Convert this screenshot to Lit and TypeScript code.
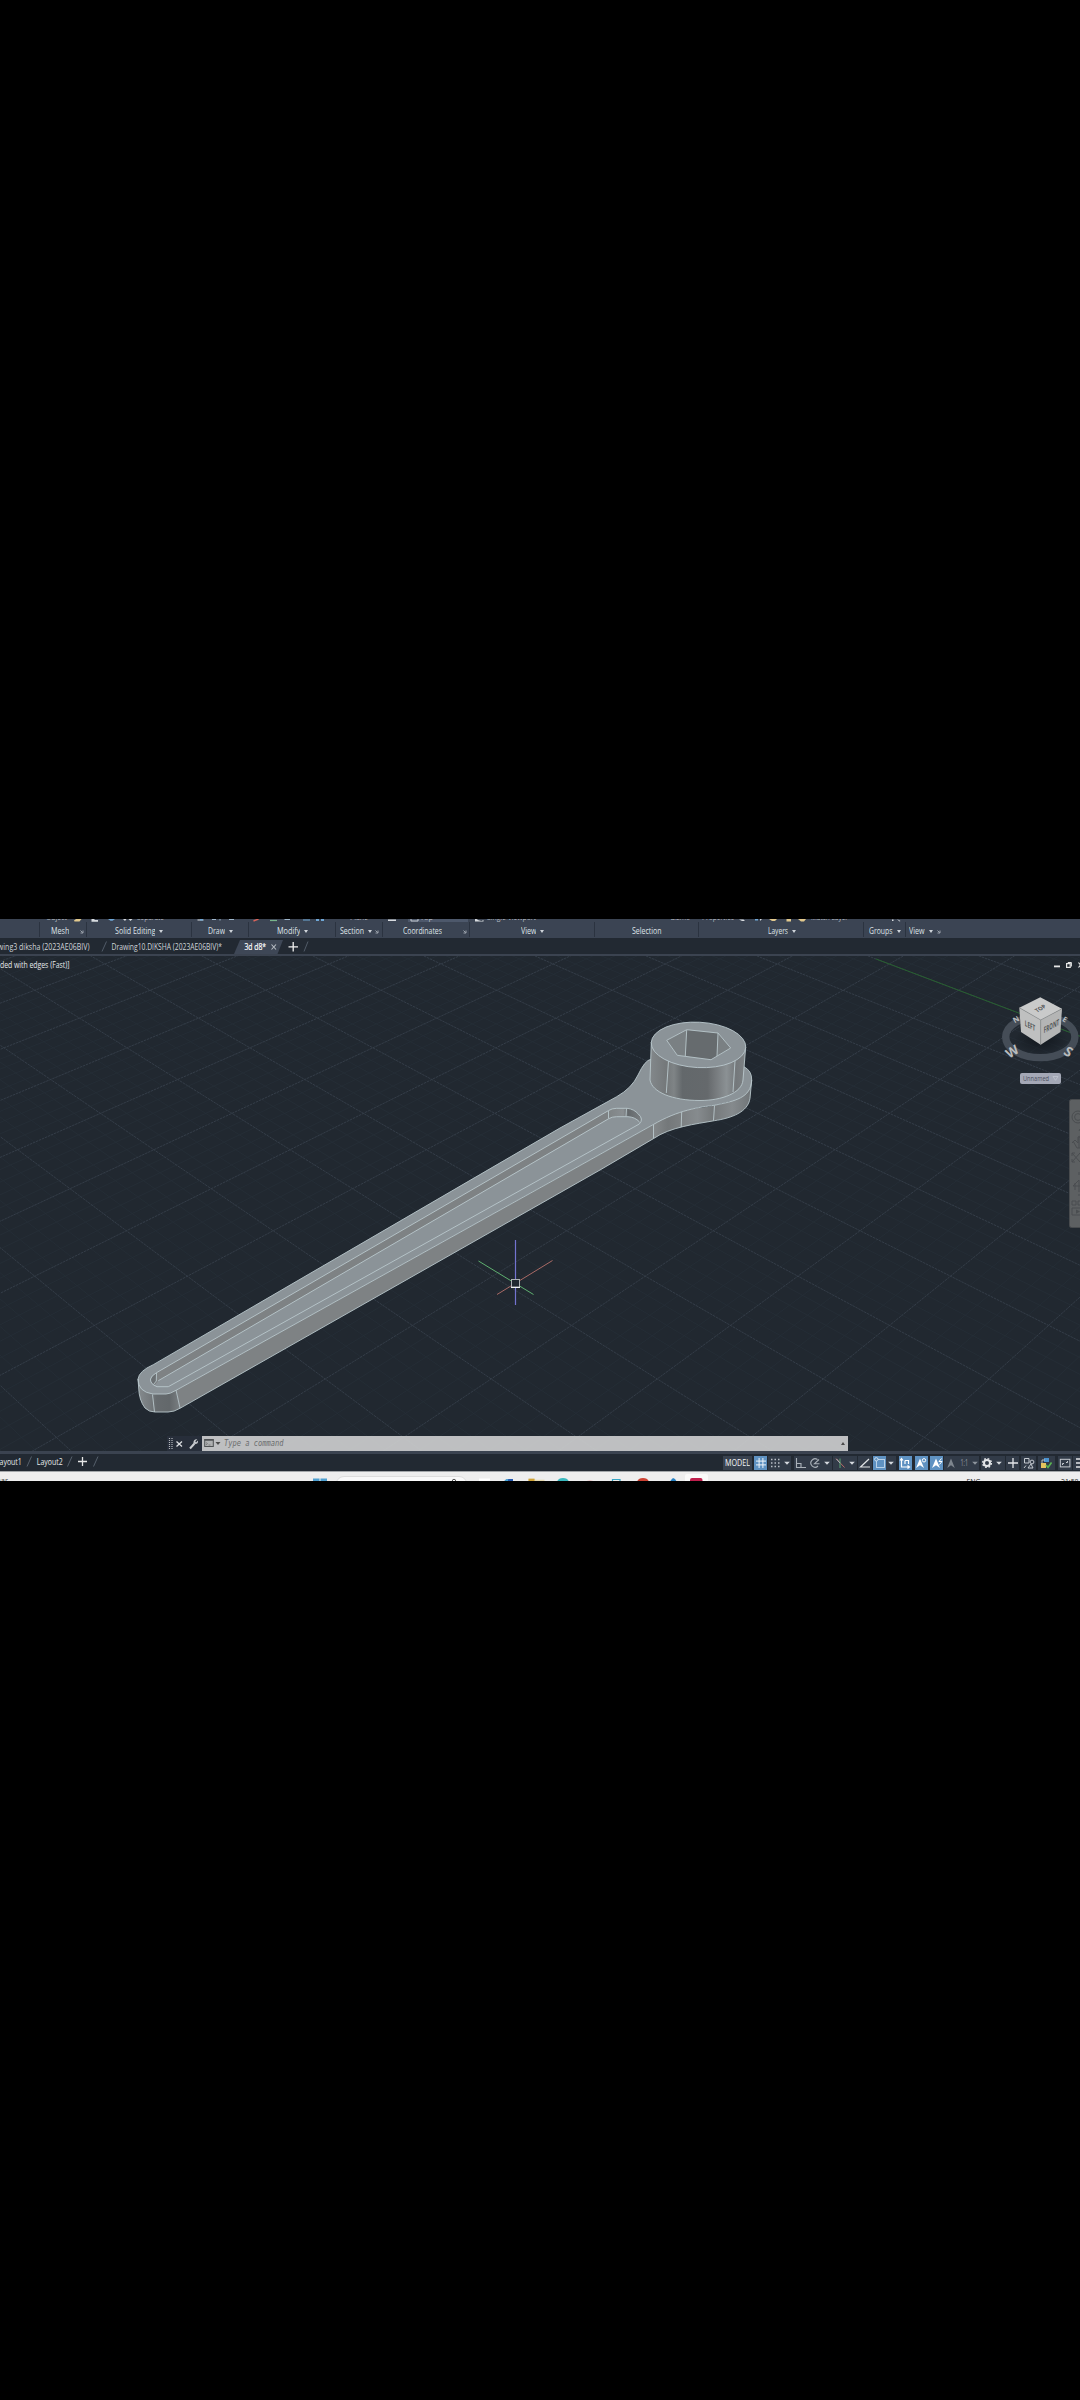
import { LitElement, html, svg, css } from "lit";
import { customElement } from "lit/decorators.js";

/* Ribbon panels: width, label inset, label width, whether it has a dropdown or a launcher (inset from right) */
interface Panel {
  w: number;
  pad: number;
  text: string;
  tw: number;
  arrow?: boolean;
  launch?: number;
}

const panels: Panel[] = [
  { w: 39.5, pad: 0, text: "", tw: 0 },
  { w: 47, pad: 11, text: "Mesh", tw: 18.5, launch: 2 },
  { w: 105, pad: 28, text: "Solid Editing", tw: 40.5, arrow: true },
  { w: 57, pad: 16, text: "Draw", tw: 17, arrow: true },
  { w: 87.5, pad: 28, text: "Modify", tw: 23.5, arrow: true },
  { w: 46.5, pad: 3.5, text: "Section", tw: 24, arrow: true, launch: 3 },
  { w: 87.5, pad: 20.5, text: "Coordinates", tw: 39, launch: 2.5 },
  { w: 124.5, pad: 50.5, text: "View", tw: 15.5, arrow: true },
  { w: 104, pad: 37.5, text: "Selection", tw: 29.5 },
  { w: 165, pad: 69, text: "Layers", tw: 20, arrow: true },
  { w: 42, pad: 5.5, text: "Groups", tw: 23.5, arrow: true },
  { w: 174.5, pad: 3.5, text: "View", tw: 15.5, arrow: true, launch: 139.5 },
];

/* One line of text squeezed or stretched to a given width */
const fit = (text: string, w: number, size = 8.6, fill = "#dfe3e8", h = 12) => html`
  <svg width=${w} height=${h} viewBox="0 0 ${w} ${h}" class="fit">
    <text x="0" y=${h - 3} font-size=${size} font-family="Open Sans, Noto Sans, sans-serif" fill=${fill}
      textLength=${w} lengthAdjust="spacingAndGlyphs">${text}</text>
  </svg>`;

/* Perspective ground grid */
const node = (p: number, q: number): [number, number] => {
  const y = 102 + 1 / (0.0011601 - 0.00003427 * (p + q));
  const a = (p - q) / 2 + 0.5;
  return [509.1 + (a - 0.108) * 0.13 * (y - 102), y];
};
const seg = (a: [number, number], b: [number, number]) =>
  `M${a[0].toFixed(1)} ${a[1].toFixed(1)}L${b[0].toFixed(1)} ${b[1].toFixed(1)}`;

const gridPaths = () => {
  let major = "";
  let minor = "";
  for (let i = -50; i <= 80; i++) {
    const v = i / 5;
    const d = seg(node(v, -4 - v), node(v, 17 - v)) + seg(node(-4 - v, v), node(17 - v, v));
    if (i % 5 === 0) major += d;
    else minor += d;
  }
  return { major, minor };
};
const grid = gridPaths();

@customElement("cad-viewport")
class CadViewport extends LitElement {
  static styles = css`
    :host { display: block; width: 1080px; height: 495px; }
    svg { display: block; }
    .minor { stroke: #262e37; stroke-width: 0.8; fill: none; }
    .major { stroke: #343d48; stroke-width: 1; fill: none; stroke-dasharray: 2.5 0.8; }
    .edge { stroke: #b9c7cc; stroke-width: 0.9; fill: none; stroke-linejoin: round; }
    .t { font-family: "Open Sans", "Noto Sans", sans-serif; }
  `;

  render() {
    return html`
      <svg width="1080" height="495" viewBox="0 956 1080 495">
        <defs>
          <linearGradient id="cyl" x1="650" x2="745.7" gradientUnits="userSpaceOnUse" y1="0" y2="0">
            <stop offset="0" stop-color="#83888b" /><stop offset="0.17" stop-color="#74787a" />
            <stop offset="0.25" stop-color="#7f8486" /><stop offset="0.34" stop-color="#63686b" />
            <stop offset="0.6" stop-color="#65696c" /><stop offset="0.68" stop-color="#75797c" />
            <stop offset="0.8" stop-color="#8b9194" /><stop offset="0.9" stop-color="#74787b" />
            <stop offset="1" stop-color="#7d8285" />
          </linearGradient>
          <linearGradient id="side" x1="653" x2="752" gradientUnits="userSpaceOnUse" y1="0" y2="0">
            <stop offset="0" stop-color="#85898b" /><stop offset="0.15" stop-color="#74787a" />
            <stop offset="0.28" stop-color="#7c8082" /><stop offset="0.45" stop-color="#868b8e" />
            <stop offset="0.6" stop-color="#74787a" /><stop offset="0.8" stop-color="#858a8d" />
            <stop offset="1" stop-color="#6f7477" />
          </linearGradient>
          <linearGradient id="tip" x1="138" x2="180" gradientUnits="userSpaceOnUse" y1="0" y2="0">
            <stop offset="0" stop-color="#858b8e" /><stop offset="0.3" stop-color="#74797c" />
            <stop offset="0.45" stop-color="#666b6e" /><stop offset="0.75" stop-color="#63686b" />
            <stop offset="1" stop-color="#7a7f82" />
          </linearGradient>
          <linearGradient id="slot" x1="608" x2="642" gradientUnits="userSpaceOnUse" y1="0" y2="0">
            <stop offset="0" stop-color="#7e8385" /><stop offset="0.45" stop-color="#8a8f92" />
            <stop offset="0.6" stop-color="#63686b" /><stop offset="1" stop-color="#7c8184" />
          </linearGradient>
          <radialGradient id="shade"><stop offset="0" stop-color="#11161c" stop-opacity="0.9" /><stop offset="1" stop-color="#11161c" stop-opacity="0" /></radialGradient>
        </defs>
        <rect y="956" width="1080" height="495" fill="#212830" />
        <path class="minor" d=${grid.minor} />
        <path class="major" d=${grid.major} />
        <path d=${seg(node(2.8, -3), node(6, -3))} stroke="#27602f" stroke-width="1" />

        ${this.wrench()} ${this.cursor()} ${this.cube()} ${this.navBar()}

        <g class="t">
          <text x="0" y="967.6" font-size="8.8" fill="#e6e9ec" textLength="69.5" lengthAdjust="spacingAndGlyphs">ded with edges (Fast)]</text>
        </g>
        <g fill="none" stroke="#e6e6e6">
          <path d="M1054 966.4h6" stroke-width="1.8" />
          <rect x="1066.6" y="963.6" width="3.6" height="3.8" stroke-width="1.2" />
          <path d="M1067.8 962.5h3.6v4" stroke-width="1" />
          <path d="M1078.5 962.5l4 5M1082.5 962.5l-4 5" stroke-width="1.2" />
        </g>
      </svg>
    `;
  }

  wrench() {
    return svg`
      <path fill="#7e8284" d="M176 1390L572 1170L653 1124.7V1138.9L600 1170L180 1408.3Z" />
      <path fill="url(#tip)" d="M138 1379L138.7 1388Q139 1400 145 1408Q149 1412 155 1412H168Q174 1412 180 1408.3L176 1388Z" />
      <path fill="url(#side)" d="M653 1124C682 1105 700 1110 714.3 1105.3Q748 1100 751.7 1080L750 1098.3C748 1112 732 1118 714.3 1120.7C696 1124 670 1127 653 1138.9Z" />
      <path fill="#8b9398" d="M138 1379Q139 1371 153.3 1364.7L560 1128L616.7 1096.7Q632 1088 638 1075Q645 1060 651 1059L744 1066.7Q752 1071 751.7 1080C751 1098 735 1100.5 714.3 1105.3C700 1107 678 1110 653 1124.7L572 1170L176 1390.3Q170 1394 166 1394H153Q138 1392 138 1379Z" />
      <path fill="#7e8284" d="M156.5 1372.7L608.3 1110.7V1118.7L158.3 1380.7L155 1385Q148 1379 156.5 1372.7Z" />
      <path fill="#6a6f72" d="M156.2 1373.2V1382L154 1385Q147 1379 156.2 1373.2Z" />
      <path fill="url(#slot)" d="M608.3 1110.7Q612 1108.3 616.7 1108.3H627Q634 1109 638.3 1114Q642 1118 640.5 1122.5Q636 1116.7 628 1116.7H616.7Q612 1116.7 608.3 1118.7Z" />
      <path class="edge" d="M138 1379Q139 1371 153.3 1364.7L560 1128L616.7 1096.7Q632 1088 638 1075Q645 1060 651 1059.3" />
      <path class="edge" d="M138 1379Q138 1392 153 1394H166Q170 1394 176 1390.3L572 1170L653 1124.7C678 1110 700 1107 714.3 1105.3C735 1101 751 1098 751.7 1080Q752 1071 744 1066.7" />
      <path class="edge" d="M138 1379L138.7 1388Q139 1400 145 1408Q149 1412 155 1412H168Q174 1412 180 1408.3L600 1170L653.3 1138.7C670 1127 696 1124 714.3 1120.7C732 1118 748 1112 750 1098.3L751.7 1080" />
      <path class="edge" d="M152.5 1394.5L154.5 1412M176 1390L180 1408M653.5 1125V1138.5M681.7 1112L681.2 1127M714.5 1105.5L713.5 1120.5" />
      <path class="edge" d="M158.3 1380.7L608.7 1118.7Q612 1116.7 616.7 1116.7H628Q635 1117 639.5 1122" />
      <path class="edge" d="M156.5 1372.7L608.3 1110.7Q612 1108.3 616.7 1108.3H627Q634 1109 638.3 1114Q644 1119 639.3 1124L168.3 1386.7H157Q150 1384 150.5 1379Q151 1376 156.5 1372.7L156.3 1381L153.5 1384.5M608.5 1111V1118.5M626.5 1108.5L626 1116.5" />

      <path fill="url(#cyl)" d="M651.3 1042L650 1080C652 1092 672 1100.5 700 1100.5C722 1100.5 742 1093 743 1080L745.7 1047Z" />
      <path class="edge" d="M651.3 1042L650 1080C652 1092 672 1100.5 700 1100.5C722 1100.5 742 1093 743 1080L745.7 1047" />
      <path class="edge" d="M668.5 1061L666.3 1093M735 1061L733 1092" />
      <ellipse cx="698.5" cy="1044.9" rx="47.3" ry="22.7" transform="rotate(3 698.5 1044.9)" fill="#8b9398" stroke="#b9c7cc" stroke-width="0.9" />
      <path fill="#666b6e" d="M666.7 1040.3L686.7 1029.7L718 1033L730.7 1048L711 1059.7L677.3 1055.3Z" />
      <path fill="#7a8083" d="M666.7 1040.3L686.7 1029.7L685.3 1056L677.3 1055.3ZM718 1033L730.7 1048L717 1056.3Z" />
      <path class="edge" d="M666.7 1040.3L686.7 1029.7L718 1033L730.7 1048L711 1059.7L677.3 1055.3ZM686.7 1030L685.3 1056M718 1033L717 1056" />
    `;
  }

  cursor() {
    return svg`
      <path d="M478.5 1261L533.5 1294.5" stroke="#5fb070" stroke-width="1" />
      <path d="M497 1294.5L552.5 1260.5" stroke="#a96a66" stroke-width="1" />
      <path d="M515.5 1240V1305" stroke="#7373cf" stroke-width="1.2" />
      <rect x="511.5" y="1279.5" width="8" height="7.6" fill="#212830" stroke="#aeb2b5" stroke-width="1" />
      <path d="M511 1287.4h9" stroke="#fff" stroke-width="1" />
    `;
  }

  cube() {
    return svg`
      <ellipse cx="1040.3" cy="1037" rx="34.6" ry="20.6" fill="none" stroke="#454d57" stroke-width="7.4" />
      <g class="t" fill="#b9bcbe" font-weight="700" text-anchor="middle">
        <text font-size="7.5" transform="translate(1017.5 1021.8) rotate(-30)">N</text>
        <text font-size="7.5" transform="translate(1063.5 1021.8) rotate(30)">E</text>
        <text font-size="13" transform="translate(1014.5 1055.5) rotate(-32)">W</text>
        <text font-size="13.5" transform="translate(1066 1055.8) rotate(32)">S</text>
      </g>
      <ellipse cx="1041" cy="1040" rx="27" ry="14" fill="url(#shade)" />
      <path fill="#c9caca" d="M1040.3 997.3L1062 1008.7L1040.7 1020L1019.3 1007.7Z" />
      <path fill="#bfc0c0" d="M1019.3 1007.7L1040.7 1020V1044.7L1021 1032Z" />
      <path fill="#b4b5b5" d="M1062 1008.7L1040.7 1020V1044.7L1060.5 1032Z" />
      <path fill="none" stroke="#8d9090" stroke-width="0.6" d="M1019.3 1007.7L1040.7 1020L1062 1008.7M1040.7 1020V1044.7" />
      <g class="t" fill="#55585a" font-weight="700" text-anchor="middle">
        <text font-size="6.6" textLength="11" lengthAdjust="spacingAndGlyphs" transform="matrix(0.85 -0.5 0.65 0.6 1042 1009.8)">TOP</text>
        <text font-size="8" textLength="11.500" lengthAdjust="spacingAndGlyphs" transform="matrix(0.9 0.48 0 1 1030 1028.5)">LEFT</text>
        <text font-size="8.4" textLength="17" lengthAdjust="spacingAndGlyphs" transform="matrix(0.9 -0.5 0 1 1051.5 1029)">FRONT</text>
      </g>
      <rect x="1020" y="1073" width="41" height="11" rx="2" fill="#a4a8b6" />
      <text class="t" x="1023" y="1080.9" font-size="7" fill="#4d505e" textLength="26" lengthAdjust="spacingAndGlyphs">Unnamed</text>
      <path d="M1053 1076.5h5l-2.500 3.800z" fill="none" stroke="#c4c8d2" stroke-width="0.7" />
    `;
  }

  navBar() {
    return svg`
      <rect x="1069.5" y="1099.5" width="20" height="128" rx="2" fill="#5d6062" stroke="#484b4e" />
      <g fill="none" stroke="#4a4d50" stroke-width="1">
        <circle cx="1078" cy="1117" r="6" /><circle cx="1078" cy="1117" r="3.4" />
        <path d="M1079 1131l1-2M1072 1143l3-3 3 3v-6q2-2 2 1M1073 1141l4 7h4M1079 1148v-11" />
        <path d="M1072 1153l8 9M1072 1162l8-9M1072 1156v-3h3M1072 1159v3h3" />
        <path d="M1073 1186l6-6v12M1073 1186h8M1075 1183v7M1079 1172v3M1079 1194v2" />
        <path d="M1072 1201h4v4h-4zM1078 1201h4v4h-4zM1072 1208h10v7h-10z" />
      </g>
      <path fill="#4a4d50" d="M1076 1209.5l4 2-4 2.3z" />
    `;
  }
}

/* Status bar cells: gap before, width, glyph, look */
interface Cell {
  gap: number;
  w: number;
  glyph: string;
  on?: boolean;
}
const cells: Cell[] = [
  { gap: 2.5, w: 13, glyph: "grid", on: true },
  { gap: 0.7, w: 14.3, glyph: "dots" },
  { gap: 0, w: 9.5, glyph: "caret" },
  { gap: 2.5, w: 14, glyph: "ortho" },
  { gap: 0, w: 14.5, glyph: "polar" },
  { gap: 0, w: 9.5, glyph: "caret" },
  { gap: 0.6, w: 14.4, glyph: "iso" },
  { gap: 0, w: 10, glyph: "caret" },
  { gap: 1, w: 14, glyph: "angle" },
  { gap: 1, w: 13.3, glyph: "osnap", on: true },
  { gap: 0, w: 10, glyph: "caret" },
  { gap: 2.5, w: 12.9, glyph: "ucs", on: true },
  { gap: 3.2, w: 12.8, glyph: "anno", on: true },
  { gap: 2.5, w: 12.8, glyph: "anno2", on: true },
  { gap: 1, w: 13.5, glyph: "annoOff" },
  { gap: 0, w: 13.5, glyph: "scale" },
  { gap: 0, w: 8, glyph: "caretOff" },
  { gap: 2, w: 13, glyph: "gear" },
  { gap: 0, w: 11, glyph: "caret" },
  { gap: 1, w: 13.5, glyph: "plus" },
  { gap: 2, w: 14.5, glyph: "iso2" },
  { gap: 2, w: 17, glyph: "hw" },
  { gap: 3, w: 14, glyph: "screen" },
  { gap: 1.5, w: 10, glyph: "menu" },
];

const glyphs: Record<string, unknown> = {
  grid: svg`<path d="M-5 -1.900H5M-5 1.900H5M-1.900 -5V5M1.900 -5V5" stroke="#eef4fa" stroke-width="1"/>`,
  dots: svg`<path d="M-4 -3.5H4.6M-4 0H4.6M-4 3.5H4.6" stroke="#b9bfc6" stroke-width="1.4" stroke-dasharray="1.5 2"/>`,
  caret: svg`<path d="M-2.8 -1.3H2.8L0 1.8Z" fill="#d5d9de"/>`,
  caretOff: svg`<path d="M-2.8 -1.3H2.8L0 1.8Z" fill="#8d949c"/>`,
  ortho: svg`<path d="M-4.5 -5V4.5H5M-4.5 0.5H0V4.5" fill="none" stroke="#aab1b9" stroke-width="1.1"/>`,
  polar: svg`<path d="M3 3A4.2 4.2 0 1 1 2.5 -3.5M4.5 0.7H-0.5L4 -3.500" fill="none" stroke="#aab1b9" stroke-width="1.1"/>`,
  iso: svg`<path d="M-4 -4.5L4.5 4.5" stroke="#b86a66" stroke-width="1"/><path d="M0 -4.5V5" stroke="#58a574" stroke-width="1"/><path d="M-3.5 -4L0 0" stroke="#aab1b9"/>`,
  angle: svg`<path d="M4 -4L-4.5 4H5" fill="none" stroke="#e0e3e6" stroke-width="1.2"/>`,
  osnap: svg`<rect x="-3.5" y="-3.5" width="8" height="8" fill="none" stroke="#c3d9ee" stroke-width="0.9"/><circle cx="-3.7" cy="-3.7" r="1.7" fill="#5f92c2" stroke="#e1ecf6" stroke-width="0.8"/>`,
  ucs: svg`<path d="M-3.5 -4.5V4H4.5M-5 -2.5L-3.5 -4.500L-2 -2.500M2.500 2.500L4.500 4L2.500 5.500M0 -2.500H3.500V1M0 -2.500V1" fill="none" stroke="#fff" stroke-width="1.2"/>`,
  anno: svg`<path d="M-5 5L-1 -4.500L3 5L-1 2.200Z" fill="#fff"/><circle cx="3" cy="-2.700" r="1.700" fill="none" stroke="#fff"/>`,
  anno2: svg`<path d="M-5 5L-1 -4.500L3 5L-1 2.200Z" fill="#fff"/><path d="M4.500 -4.500L2 -1.500H5L2.500 1.500" fill="none" stroke="#fff"/>`,
  annoOff: svg`<path d="M-3.8 5L0 -4.5L3.8 5L0 2.2Z" fill="#7d858e"/>`,
  scale: svg`<text x="-3.5" y="3" font-size="8.4" font-family="Open Sans, sans-serif" fill="#9aa1a9" textLength="7.5" lengthAdjust="spacingAndGlyphs">1:1</text>`,
  gear: svg`<circle r="3" fill="none" stroke="#e3e5e8" stroke-width="2"/><circle r="4.4" fill="none" stroke="#e3e5e8" stroke-width="1.4" stroke-dasharray="1.7 1.76"/>`,
  plus: svg`<path d="M-5 0H5M0 -5V5" stroke="#e3e5e8" stroke-width="1.3"/>`,
  iso2: svg`<path d="M-4.5 -4.5H0V0H-4.5ZM-3 2.5L-5 5M2 1L4 5H-1Z" fill="none" stroke="#c5cad0" stroke-width="1"/><circle cx="3" cy="-1" r="1.9" fill="none" stroke="#c5cad0"/>`,
  hw: svg`<path d="M-2 -5H3V-1H-2Z" fill="#4b93cf"/><path d="M-5 0H0V5H-5Z" fill="#e6c35e"/><path d="M0 2L2 4.5L5.5 -0.5" fill="none" stroke="#5bb552" stroke-width="1.6"/><path d="M-4 0V-3H-1" fill="none" stroke="#c5cad0" stroke-width="0.9"/>`,
  screen: svg`<rect x="-4.7" y="-3.7" width="9.6" height="7.6" fill="none" stroke="#c5cad0" stroke-width="1"/><path d="M-2.5 2V0.5H-1M2.5 -2V-0.5H1" fill="none" stroke="#c5cad0"/>`,
  menu: svg`<path d="M-2 -4H5M-2 0H5M-2 4H5" stroke="#e3e5e8" stroke-width="1.3"/>`,
};

@customElement("app-root")
class AppRoot extends LitElement {
  static styles = css`
    :host { display: block; width: 1080px; height: 2400px; background: #000; overflow: hidden; }
    * { box-sizing: border-box; }
    svg { display: block; flex: none; }
    .screen { display: flex; flex-direction: column; width: 1080px; height: 562px; margin-top: 919px; overflow: hidden; }
    .cut { height: 3px; background: #3b4453; flex: none; overflow: hidden; }
    .ribbon { display: flex; height: 16px; flex: none; background: #3b4453; padding-bottom: 1px; }
    .panel { display: flex; align-items: flex-end; flex: none; border-right: 1px solid #2b3340; }
    .panel:last-child { border: 0; }
    .arrow { width: 0; height: 0; border: 2px solid transparent; border-top: 3px solid #cfd4da; border-bottom: 0; margin: 0 0 4px 4px; flex: none; }
    .launch { margin: 0 0 3px auto; }
    .tabs { display: flex; align-items: center; height: 16px; flex: none; background: #222932; }
    .rule { height: 3px; flex: none; background: #3b4350; }
    .stage { display: grid; flex: none; height: 495px; margin-top: -1px; }
    .stage > * { grid-area: 1 / 1; }
    .command { align-self: end; display: flex; width: 681px; height: 15.5px; margin-left: 167px; z-index: 1; }
    .grip { width: 35px; background: #272e3a; display: flex; align-items: center; flex: none; }
    .field { flex: 1; background: rgba(202, 203, 204, 0.93); display: flex; align-items: center; padding: 0 3px 0 2px; }
    .up { margin-left: auto; border: 2px solid transparent; border-bottom: 3px solid #4a4a4a; border-top: 0; }
    .status { display: flex; align-items: center; height: 17px; flex: none; background: #222932; overflow: hidden; }
    .left { width: 723px; display: flex; align-items: center; flex: none; }
    .model { width: 28.5px; height: 14px; padding-left: 2px; background: #39424f; display: flex; align-items: center; flex: none; }
    .cell { height: 14px; background: #323b48; display: flex; justify-content: center; align-items: center; flex: none; }
    .on { background: #5f92c2; }
    .task { height: 10px; flex: none; background: #eee; border-top: 1px solid #a3a7aa; overflow: hidden; }
  `;

  render() {
    return html`
      <div class="screen">
        <div class="cut">${this.cutRow()}</div>
        <div class="ribbon">
          ${panels.map(
            (p) => html`<div class="panel" style="width:${p.w}px;padding-left:${p.pad}px">
              ${p.text ? fit(p.text, p.tw) : ""}
              ${p.arrow ? html`<span class="arrow"></span>` : ""}
              ${p.launch
                ? html`<svg class="launch" style="margin-right:${p.launch}px" width="4" height="4"><path d="M0.500 0.500L2.500 2.500M3 0.500V3H0.500" stroke="#b4bac3" stroke-width="0.8" fill="none" /></svg>`
                : ""}
            </div>`
          )}
        </div>
        <div class="tabs">${this.tabs()}</div>
        <div class="rule"></div>
        <div class="stage">
          <cad-viewport></cad-viewport>
          <div class="command">
            <div class="grip">
              <svg width="35" height="15"><path d="M2.5 2V13M5 2V13" stroke="#b4b8bc" stroke-width="1.2" stroke-dasharray="1 1" />
                <path d="M9.5 5.5L15 10.5M15 5.5L9.5 10.5" stroke="#dcdfe2" stroke-width="1.3" />
                <path d="M23 12.5L27.5 7.5" stroke="#c9ccd0" stroke-width="2" /><path d="M30.3 3.2L28.3 5.2L29 6.5L31 4.5Q31.5 8 28 8Q25.5 7.5 27 4.5Q28 3 30.3 3.2Z" fill="#c9ccd0" /></svg>
            </div>
            <div class="field">
              <svg width="20" height="12"><rect x="0.7" y="2.5" width="8.6" height="7" fill="#aeb0b1" stroke="#4e5153" /><path d="M0.5 3H9.5" stroke="#4e5153" stroke-width="1.5" /><path d="M2 5.5l1.5 1.2L2 8M4.500 8h2" fill="none" stroke="#666" stroke-width="0.7" /><path d="M11.5 5h5l-2.500 3z" fill="#4a4a4a" /></svg>
              <svg width="62" height="12"><text x="0" y="8.6" font-size="8" font-style="italic" font-family="DejaVu Sans Mono, monospace" fill="#6b6d6e" textLength="59.5" lengthAdjust="spacingAndGlyphs">Type a command</text></svg>
              <span class="up"></span>
            </div>
          </div>
        </div>
        <div class="rule"></div>
        <div class="status">
          <div class="left">
            <svg width="110" height="17">
              <g font-family="Open Sans, Noto Sans, sans-serif" font-size="8.8" fill="#e6e9ec">
                <text x="-4" y="10.6" textLength="25.8" lengthAdjust="spacingAndGlyphs">Layout1</text>
                <text x="36.8" y="10.6" textLength="25.8" lengthAdjust="spacingAndGlyphs">Layout2</text>
              </g>
              <path d="M27 12.500L31.500 2.500M67.500 12.500L72 2.500M93.500 12.500L98 2.500" stroke="#56606c" />
              <path d="M78 7.500H87M82.500 3V12" stroke="#e6e6e6" stroke-width="1.3" />
            </svg>
          </div>
          <div class="model">${fit("MODEL", 25, 9, "#f2f4f6", 13)}</div>
          ${cells.map(
            (c) => html`<div class="cell ${c.on ? "on" : ""}" style="width:${c.w}px;margin-left:${c.gap}px">
              <svg width="12" height="12" viewBox="-6 -6 12 12">${glyphs[c.glyph]}</svg>
            </div>`
          )}
        </div>
        <div class="task">${this.taskRow()}</div>
      </div>
    `;
  }

  tabs() {
    return html`<svg width="320" height="16" viewBox="0 938 320 16">
      <path d="M234 954L240 940H283L277.5 954Z" fill="#3e4756" />
      <g font-family="Open Sans, Noto Sans, sans-serif" font-size="8.6" fill="#d0d5da">
        <text x="-14" y="949.6" textLength="103.5" lengthAdjust="spacingAndGlyphs">Drawing3 diksha (2023AE06BIV)</text>
        <text x="111.5" y="949.6" textLength="110.5" lengthAdjust="spacingAndGlyphs">Drawing10.DIKSHA (2023AE06BIV)*</text>
        <text x="244.5" y="949.6" fill="#fff" stroke="#fff" stroke-width="0.2" textLength="21.5" lengthAdjust="spacingAndGlyphs">3d d8*</text>
      </g>
      <path d="M102 951.5L106.5 941.5M304 951.5L308 941.5" stroke="#515b68" />
      <path d="M271.5 944.5L276 949.5M276 944.5L271.5 949.5" stroke="#b9bec5" stroke-width="1.1" />
      <path d="M288.5 946.8H298M293.2 942V951.5" stroke="#f0f0f0" stroke-width="1.3" />
    </svg>`;
  }

  cutRow() {
    const labels: [number, number, string][] = [
      [46, 21, "Object"], [137, 27, "Separate"], [350, 18, "Plane"], [487, 49, "Single Viewport"],
      [670, 20, "Gizmo"], [702, 32, "Properties"], [811, 37, "Match Layer"],
    ];
    return html`<svg width="1080" height="4" viewBox="0 919 1080 4">
      <rect x="408" y="919" width="60" height="3.5" fill="#4d586b" />
      <g font-family="Open Sans, Noto Sans, sans-serif" font-size="8" fill="#b9bec6">
        ${labels.map(([x, w, t]) => svg`<text x=${x} y="920.300" textLength=${w} lengthAdjust="spacingAndGlyphs">${t}</text>`)}
        <text x="420" y="920.3" textLength="13" lengthAdjust="spacingAndGlyphs">Top</text>
      </g>
      <g fill="#d8dbdf">
        <path d="M91.5 919h3v1h3.500v1.800h-6.500zM123 919h3.500l-1.500 2zM128.500 919h4l-2 2zM197.500 919.500h6v1h-6zM388 919.500h8v1.500h-8zM475 919h1.500l2 1.200 3 .8 2-1v1.500h-8.500zM739 919.500h4.500l1.500 1.500h-3zM760 919h2l-2 2zM892 919.500h1.500v1.500h-1.500zM897 919l3.500 2-1 .5z" />
        <path d="M212 919.5h4M220 919v1.500M229 919.500h5M284.500 919.500h5.500" stroke="#9fb7cb" />
      </g>
      <path fill="#e2c98e" d="M74 920.5l2-1.500h5.500l-2 2.500h-5zM769 919h8l-2 2h-3zM786.500 919h4.500v2.500h-4.500zM798 919h8l-2 2.500h-3z" />
      <path fill="#6fa7d6" d="M108 919h7l-2.500 1.800h-2zM203 919v1.500h-3v-1.500zM303 919.500h7v1h-7zM316 919h3v2h-3zM321 919h3v2h-3zM755 919h3v1.500h-3z" />
      <path d="M253.5 921l5-2" stroke="#db6359" stroke-width="1.4" />
      <path d="M270 920.5h7" stroke="#79b58c" stroke-width="1.2" />
      <path d="M411 919v2h7v-2" fill="none" stroke="#c5cad2" />
    </svg>`;
  }

  taskRow() {
    return html`<svg width="1080" height="9" viewBox="0 1472 1080 9">
      <path d="M313 1478.5H319.500V1482H313ZM320.500 1478.500H327V1482H320.500Z" fill="#4e9fd0" />
      <rect x="336" y="1476.5" width="131" height="20" rx="8" fill="#fafafa" stroke="#d4d4d4" stroke-width="0.7" />
      <circle cx="454" cy="1481" r="1.7" fill="none" stroke="#555" />
      <path d="M479 1478.5h11v3h-11z" fill="#fff" />
      <path d="M504 1482q1-3 5-3h4v3z" fill="#2458b0" /><path d="M504 1482q1-3 4-3v3z" fill="#48a9d6" />
      <path d="M528.5 1478.7h6l1 1h9v2h-16z" fill="#e6d9b0" /><path d="M528.5 1478.7h6v3h-6z" fill="#d0a235" />
      <path d="M557 1482q1-4 6-4t6 4z" fill="#39b8be" />
      <path d="M584 1482.500q2-2 6-2t5 2z" fill="#e8a7a7" />
      <path d="M612.5 1482v-2.500h7.500v2.500" fill="none" stroke="#36a5c5" stroke-width="1.2" />
      <path d="M637 1482q1-4 6-4t6 4z" fill="#cc4132" />
      <path d="M670 1482l1-2 2-2 2 1 2 3z" fill="#2681c4" />
      <rect x="685" y="1474" width="23" height="12" rx="2" fill="#fafafa" />
      <path d="M690 1482v-2q0-2 2-2h8.500q2 0 2 2v2z" fill="#bf1f4d" />
      <g font-family="Open Sans, Noto Sans, sans-serif" font-size="7.5" fill="#222">
        <text x="966.5" y="1484" textLength="14" lengthAdjust="spacingAndGlyphs">ENG</text>
        <text x="1061" y="1484" textLength="17.5" lengthAdjust="spacingAndGlyphs">21:58</text>
        <text x="-10" y="1482.5" fill="#444" textLength="18" lengthAdjust="spacingAndGlyphs">Clear</text>
      </g>
    </svg>`;
  }
}
